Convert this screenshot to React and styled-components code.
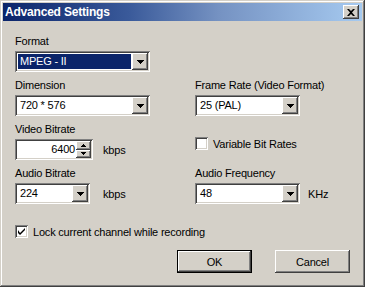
import React from 'react';
import styled, { createGlobalStyle } from 'styled-components';

const Global = createGlobalStyle`
  html, body { margin: 0; padding: 0; background: #d4d0c8; }
  body { font-family: "Liberation Sans", Arial, sans-serif; font-size: 11px; letter-spacing: -0.2px; color: #000; }
`;

const raised = `
  box-shadow: inset -1px -1px #404040, inset 1px 1px #fff, inset -2px -2px #808080, inset 2px 2px #d4d0c8;
`;
const sunken = `
  box-shadow: inset 1px 1px #808080, inset -1px -1px #fff, inset 2px 2px #404040, inset -2px -2px #d4d0c8;
`;

const Window = styled.div`
  width: 365px;
  height: 287px;
  box-sizing: border-box;
  padding: 3px;
  background: #d4d0c8;
  box-shadow: inset -1px -1px #404040, inset 1px 1px #d4d0c8, inset -2px -2px #808080, inset 2px 2px #fff;
  display: flex;
  flex-direction: column;
`;

const TitleBar = styled.div`
  height: 18px;
  display: flex;
  align-items: center;
  justify-content: space-between;
  padding: 0 3px 0 2px;
  background: linear-gradient(to right, #0a246a 0%, #3a5a9a 35%, #7592c2 60%, #a6caf0 100%);
`;

const Title = styled.span`
  color: #fff;
  font-weight: bold;
  font-size: 12px;
  letter-spacing: -0.2px;
`;

const CloseButton = styled.div`
  width: 16px;
  height: 14px;
  background: #d4d0c8;
  ${raised}
  display: flex;
  align-items: center;
  justify-content: center;
`;

const Body = styled.div`
  flex: 1;
  padding: 14px 12px 0 12px;
  display: flex;
  flex-direction: column;
`;

const Grid = styled.div`
  display: grid;
  grid-template-columns: 180px 1fr;
  row-gap: 7px;
`;

const Field = styled.div`
  display: flex;
  flex-direction: column;
  padding-top: ${p => p.$offset || 0}px;
`;

const Label = styled.div`
  height: 13px;
  line-height: 13px;
  margin-bottom: 3px;
  white-space: nowrap;
`;

const ControlRow = styled.div`
  display: flex;
  align-items: center;
`;

const Combo = styled.div`
  width: ${p => p.$w}px;
  height: 21px;
  box-sizing: border-box;
  padding: 2px;
  background: #fff;
  ${sunken}
  display: flex;
`;

const ComboValue = styled.div`
  flex: 1;
  margin: 1px;
  padding-left: 2px;
  line-height: 15px;
  background: ${p => (p.$selected ? '#0a246a' : '#fff')};
  color: ${p => (p.$selected ? '#fff' : '#000')};
  white-space: nowrap;
`;

const DropButton = styled.div`
  width: 16px;
  height: 17px;
  background: #d4d0c8;
  ${raised}
  display: flex;
  align-items: center;
  justify-content: center;
`;

const SpinBox = styled.div`
  width: 78px;
  height: 21px;
  box-sizing: border-box;
  padding: 2px;
  background: #fff;
  ${sunken}
  display: flex;
`;

const SpinValue = styled.div`
  flex: 1;
  text-align: right;
  line-height: 17px;
  padding-right: 1px;
`;

const SpinButtons = styled.div`
  width: 15px;
  display: flex;
  flex-direction: column;
`;

const SpinButton = styled.div`
  flex: 1;
  background: #d4d0c8;
  ${raised}
  display: flex;
  align-items: center;
  justify-content: center;
`;

const Unit = styled.span`
  margin-left: ${p => p.$gap}px;
`;

const CheckRow = styled.label`
  display: flex;
  align-items: center;
  gap: 5px;
  height: 13px;
  margin-top: ${p => p.$top || 0}px;
`;

const CheckBox = styled.span`
  width: 13px;
  height: 13px;
  box-sizing: border-box;
  background: #fff;
  ${sunken}
  display: flex;
  align-items: center;
  justify-content: center;
`;

const ButtonRow = styled.div`
  display: flex;
  justify-content: flex-end;
  gap: 23px;
  margin-top: 12px;
`;

const PushButton = styled.div`
  width: 75px;
  height: 23px;
  box-sizing: border-box;
  background: #d4d0c8;
  display: flex;
  align-items: center;
  justify-content: center;
  ${p => p.$default
    ? 'box-shadow: inset 0 0 0 1px #000, inset -2px -2px #404040, inset 2px 2px #fff, inset -3px -3px #808080;'
    : raised}
`;

const Arrow = () => (
  <svg width="7" height="4" viewBox="0 0 7 4">
    <path d="M0 0h7v1H0zM1 1h5v1H1zM2 2h3v1H2zM3 3h1v1H3z" fill="#000" />
  </svg>
);

const Tiny = ({ up }) => (
  <svg width="5" height="3" viewBox="0 0 5 3" style={{ transform: up ? 'rotate(180deg)' : 'none' }}>
    <path d="M0 0h5v1H0zM1 1h3v1H1zM2 2h1v1H2z" fill="#000" />
  </svg>
);

const Check = () => (
  <svg width="7" height="7" viewBox="0 0 7 7">
    <path d="M0 2v3l2 2 5-5V0L2 5z" fill="#000" />
  </svg>
);

const Select = ({ w, value, selected }) => (
  <Combo $w={w}>
    <ComboValue $selected={selected}>{value}</ComboValue>
    <DropButton><Arrow /></DropButton>
  </Combo>
);

export default function App() {
  return (
    <>
      <Global />
      <Window>
        <TitleBar>
          <Title>Advanced Settings</Title>
          <CloseButton>
            <svg width="8" height="7" viewBox="0 0 8 7">
              <path d="M0 0h2l2 2 2-2h2L5 3.5 8 7H6L4 5 2 7H0l3-3.5z" fill="#000" />
            </svg>
          </CloseButton>
        </TitleBar>
        <Body>
          <Grid>
            <Field>
              <Label>Format</Label>
              <Select w={135} value="MPEG - II" selected />
            </Field>
            <div />
            <Field>
              <Label>Dimension</Label>
              <Select w={135} value="720 * 576" />
            </Field>
            <Field>
              <Label>Frame Rate (Video Format)</Label>
              <Select w={105} value="25 (PAL)" />
            </Field>
            <Field>
              <Label>Video Bitrate</Label>
              <ControlRow>
                <SpinBox>
                  <SpinValue>6400</SpinValue>
                  <SpinButtons>
                    <SpinButton><Tiny up /></SpinButton>
                    <SpinButton><Tiny /></SpinButton>
                  </SpinButtons>
                </SpinBox>
                <Unit $gap={10}>kbps</Unit>
              </ControlRow>
            </Field>
            <Field $offset={14}>
              <CheckRow>
                <CheckBox />
                Variable Bit Rates
              </CheckRow>
            </Field>
            <Field>
              <Label>Audio Bitrate</Label>
              <ControlRow>
                <Select w={75} value="224" />
                <Unit $gap={13}>kbps</Unit>
              </ControlRow>
            </Field>
            <Field>
              <Label>Audio Frequency</Label>
              <ControlRow>
                <Select w={105} value="48" />
                <Unit $gap={8}>KHz</Unit>
              </ControlRow>
            </Field>
          </Grid>
          <CheckRow $top={21}>
            <CheckBox><Check /></CheckBox>
            Lock current channel while recording
          </CheckRow>
          <ButtonRow>
            <PushButton $default>OK</PushButton>
            <PushButton>Cancel</PushButton>
          </ButtonRow>
        </Body>
      </Window>
    </>
  );
}
